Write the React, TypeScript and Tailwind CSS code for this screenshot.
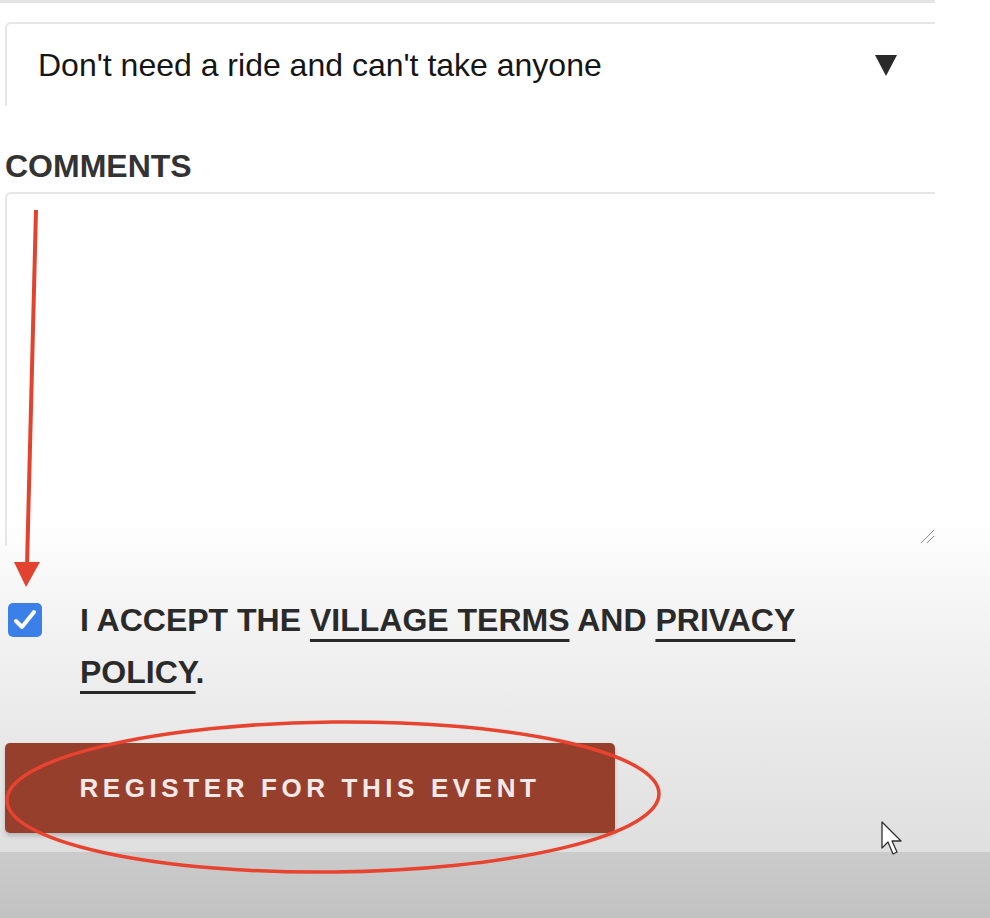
import React from "react";

const font = "font-['Liberation_Sans',Arial,sans-serif]";

export default function App() {
  return (
    <div
      className={`relative flex h-[918px] w-[990px] flex-col overflow-hidden bg-[linear-gradient(to_bottom,#ffffff_0px,#ffffff_520px,#f5f5f5_600px,#eaeaea_720px,#dfdfdf_852px)] ${font}`}
    >
      <div className="flex w-[935px] flex-col pl-[5px]">
        {/* bottom edge of previous field */}
        <div className="-ml-[5px] h-[3px] w-[935px] bg-[#e4e4e4]" />

        {/* ride select */}
        <div className="mt-[19px] flex h-[84px] items-center justify-between rounded-tl-md border-l-2 border-t-2 border-[#e6e6e6] pl-[31px] pr-[38px]">
          <span className="text-[32px] leading-none text-[#151515]">
            Don't need a ride and can't take anyone
          </span>
          <svg width="22" height="21" viewBox="0 0 22 21" aria-hidden="true">
            <polygon points="0,0 22,0 11,21" fill="#2a2a2a" />
          </svg>
        </div>

        {/* comments */}
        <label className="mt-[44px] text-[32px] font-bold leading-none text-[#333333]">
          COMMENTS
        </label>
        <div className="relative mt-[10px] h-[354px] rounded-tl-md border-l-2 border-t-2 border-[#e6e6e6]">
          <svg
            className="absolute bottom-[2px] right-0"
            width="15"
            height="15"
            viewBox="0 0 15 15"
            aria-hidden="true"
          >
            <line x1="1" y1="14" x2="14" y2="1" stroke="#8a8a8a" strokeWidth="1" />
            <line x1="7" y1="14" x2="14" y2="7" stroke="#8a8a8a" strokeWidth="1" />
          </svg>
        </div>

        {/* terms */}
        <div className="ml-[3px] mt-[48px] flex items-start gap-[38px]">
          <div className="mt-[9px] flex h-[34px] w-[34px] shrink-0 items-center justify-center rounded-[5px] bg-[#3b7fe8]">
            <svg width="24" height="24" viewBox="0 0 24 24" aria-hidden="true">
              <polyline
                points="3,13 9,19 21,4"
                fill="none"
                stroke="#ffffff"
                strokeWidth="4"
                strokeLinecap="round"
                strokeLinejoin="round"
              />
            </svg>
          </div>
          <p className="w-[740px] text-[32px] font-bold leading-[52px] text-[#2a2a2a]">
            I ACCEPT THE{" "}
            <a className="underline decoration-[3px] underline-offset-[8px]">VILLAGE TERMS</a>{" "}
            AND{" "}
            <a className="underline decoration-[3px] underline-offset-[8px]">PRIVACY POLICY</a>.
          </p>
        </div>

        {/* submit */}
        <button className="mt-[45px] flex h-[90px] w-[610px] items-center justify-center rounded-[5px] bg-[#963f2d] text-[26px] font-bold tracking-[4.6px] text-[#f3e9e9] shadow-[0_3px_4px_rgba(0,0,0,0.18)]">
          REGISTER FOR THIS EVENT
        </button>
      </div>

      {/* player bar */}
      <div className="mt-auto h-[66px] w-full bg-[linear-gradient(to_bottom,#cbcbcb,#c2c2c2)]" />

      {/* annotations */}
      <svg
        className="pointer-events-none absolute left-0 top-0"
        width="990"
        height="918"
        viewBox="0 0 990 918"
        aria-hidden="true"
      >
        <line x1="36" y1="210" x2="27" y2="566" stroke="#e2432f" strokeWidth="4" />
        <polygon points="14,562 40,562 26,587" fill="#e2432f" />
        <ellipse
          cx="333"
          cy="797"
          rx="326"
          ry="75"
          transform="rotate(-0.6 333 797)"
          fill="none"
          stroke="#e8432e"
          strokeWidth="3.5"
        />
      </svg>

      {/* mouse cursor */}
      <svg
        className="pointer-events-none absolute left-[881px] top-[821px]"
        width="24"
        height="36"
        viewBox="0 0 24 36"
        aria-hidden="true"
      >
        <path
          d="M1 1 L1 27 L7 21 L12 33 L16 31 L11 20 L20 20 Z"
          fill="#ffffff"
          stroke="#2f2f2f"
          strokeWidth="1.3"
          strokeLinejoin="round"
        />
      </svg>
    </div>
  );
}
